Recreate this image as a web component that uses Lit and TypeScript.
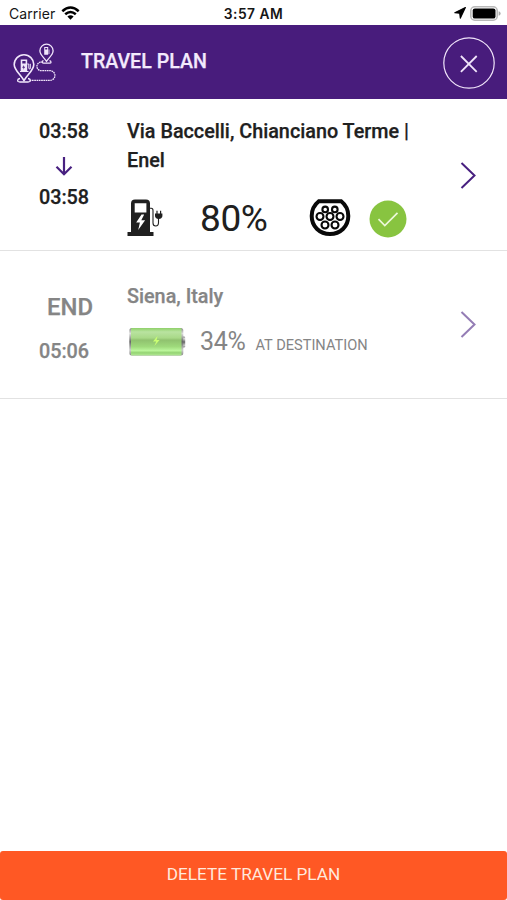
import { LitElement, html, css, svg } from "lit";
import { customElement } from "lit/decorators.js";

@customElement("status-bar")
export class StatusBar extends LitElement {
  static styles = css`
    :host { display: grid; grid-template-columns: 1fr auto 1fr; align-items: center; height: 25px; box-sizing: border-box; padding: 2px 6px 0 9px; background: #fff; color: #161616; font: 400 14px/20px Inter, sans-serif; }
    .left { display: flex; align-items: center; gap: 6px; letter-spacing: .05px; }
    .left svg { margin-top: -2px; }
    .time { font-weight: 600; font-size: 13.8px; letter-spacing: .5px; margin-right: 3px; }
    .right { display: flex; align-items: center; justify-content: flex-end; gap: 4px; }
    .right svg { margin-top: -1px; }
    svg { display: block; }
  `;
  render() {
    return html`
      <div class="left"><span>Carrier</span>
        <svg width="19" height="14" viewBox="0 0 19 14" fill="none" stroke="#000" stroke-width="2.5">
          <path d="M1.3 5.2Q9.5-2.2 17.7 5.2M4.2 8.3Q9.5 3.6 14.8 8.3"/><path d="M6.4 10.6Q9.5 7.9 12.6 10.6L9.5 13.7Z" fill="#000" stroke="none"/>
        </svg>
      </div>
      <div class="time">3:57 AM</div>
      <div class="right">
        <svg width="12" height="12" viewBox="0 0 12 12"><path d="M11.4.6L.8 5.7 5.7 6.3 6.3 11.2Z" fill="#000" stroke="#000" stroke-width="1.1" stroke-linejoin="round"/></svg>
        <svg width="31" height="15" viewBox="0 0 31 15"><rect x=".8" y=".8" width="26.4" height="13.4" rx="4" fill="#fff" stroke="#b9b9b9" stroke-width="1.6"/><rect x="2.7" y="2.4" width="22.8" height="10.2" rx="2.2"/><path d="M28.6 5.2q2 .5 2 2.3t-2 2.3z" fill="#aaa"/></svg>
      </div>`;
  }
}

@customElement("plan-header")
export class PlanHeader extends LitElement {
  static styles = css`
    :host { display: flex; align-items: center; height: 73.5px; box-sizing: border-box; padding: 0 12px; background: #481c7c; color: #f3eafc; }
    .route { display: block; margin-top: 2px; }
    h1 { flex: 1; margin: 0 0 0 23px; font: 500 19.6px/24px Roboto, sans-serif; -webkit-text-stroke: .25px; }
    button { width: 52px; height: 52px; padding: 0; border: 0; background: none; margin-top: 3px; }
    button svg { display: block; }
  `;
  render() {
    return html`
      <svg class="route" width="46" height="44" viewBox="12 40 46 44" fill="none" stroke="#f1e6fb" stroke-width="1.6">
        <path d="M24 79.5C20 73 14.2 69 14.2 63.5a9.8 9.8 0 0 1 19.6 0C33.8 69 28 73 24 79.5Z"/>
        <path d="M46.5 60.3C44 56.5 39.9 54 39.9 49.8a6.6 6.6 0 0 1 13.2 0C53.1 54 49 56.5 46.5 60.3Z" stroke-width="1.3"/>
        <path d="M20 77.5c-3 .5-3.3 3.3 0 3.5h8c3.3-.2 3-3 0-3.5M43.5 59.7c-2 .6-1.8 2.2 0 2.4h6c2 0 2-1.8 0-2.4" stroke-width="1.3"/>
        <path d="M43 61.2h-2.7a4.3 4.3 0 0 0 0 8.4H50a4.9 4.9 0 0 1 0 9.8H29" stroke-width="1.3" stroke-dasharray="1.7 .6"/>
        <path d="M20 70.5h8.5M27.3 63h1.5v4.5q1.5 1.5 1.5-.5v-4.2" stroke-width="1"/>
        <path fill="#f1e6fb" stroke="none" fill-rule="evenodd" d="M20.7 58.5h6.5V71h-6.5zM22.3 60v2.4h3.3V60zM23.8 64l-1.6 2.8h1.4l-.4 2 2-3h-1.4z"/>
        <path fill="#f1e6fb" stroke="none" fill-rule="evenodd" d="M44.2 46h4v7.8h-4zM45.2 47v1.4h2V47z"/><path d="M49 48.5v4.5" stroke-width=".8"/>
      </svg>
      <h1>TRAVEL PLAN</h1>
      <button aria-label="Close"><svg width="52" height="52" viewBox="0 0 52 52" fill="none" stroke="#f0e4fa"><circle cx="26" cy="26" r="25.2" stroke-width="1.2"/><path d="M17.9 19L33.7 34.8M33.7 19L17.9 34.8" stroke-width="1.8"/></svg></button>`;
  }
}

@customElement("app-root")
export class AppRoot extends LitElement {
  static styles = css`
    :host { display: flex; flex-direction: column; height: 900px; background: #fff; font-family: Roboto, sans-serif; color: #202020; }
    svg { display: block; }
    .stop { display: grid; grid-template-columns: 127px 1fr 47px; box-sizing: border-box; border-bottom: 1.5px solid #e2e2e2; }
    .first { height: 152.5px; }
    .last { height: 148px; color: #858585; }
    .times { display: flex; flex-direction: column; align-items: center; width: 128px; font: 500 19.8px/24px Roboto, sans-serif; -webkit-text-stroke: .25px; }
    .first .times { padding-top: 21px; }
    .times .arrow { margin: 13px 0 10px; }
    .last .times { padding-top: 43px; }
    .end { font-size: 23.9px; line-height: 26px; margin-left: 12px; }
    .end + span { margin-top: 20px; }
    .name { font: 500 19.8px/29px Roboto, sans-serif; white-space: nowrap; -webkit-text-stroke: .25px; }
    .first .name { padding-top: 18px; }
    .last .name { padding-top: 31px; }
    .facts { display: flex; align-items: center; height: 46px; margin-top: 20px; }
    .charge { width: 73px; margin: 2px 0 0 35px; font-size: 37px; line-height: 44px; letter-spacing: -.4px; }
    .plug { margin-left: 36px; }
    .check { margin: 3px 0 0 18px; }
    .arrival { display: flex; align-items: center; height: 36px; margin-top: 13px; }
    .level { font-size: 25px; line-height: 34px; margin: 0 0 0 14px; letter-spacing: -.3px; }
    .note { font-size: 14.6px; line-height: 20px; margin: 6px 0 0 10px; white-space: nowrap; }
    .first .chevron { padding-top: 63px; }
    .last .chevron { padding-top: 60px; opacity: .58; }
    .delete { margin-top: auto; height: 49px; border: 0; border-radius: 3px; padding: 0 0 3px; background: #ff5824; color: #ffe9dd; font: 400 17.2px/24px Roboto, sans-serif; }
  `;

  private chevron() {
    return html`<div class="chevron"><svg width="17" height="27" viewBox="0 0 17 27" fill="none" stroke="#482080" stroke-width="2"><path d="M1.5 1L14.5 13.5 1.5 26"/></svg></div>`;
  }

  private chargingPoint() {
    return html`<svg width="38" height="38" viewBox="0 0 38 38" fill="none" stroke="#202020">
      <path fill="#202020" stroke="none" fill-rule="evenodd" d="M4 33V4.5Q4 .5 8 .5h11q4 0 4 4V33h3.5v4H.5v-4zM7.7 4.2v9.2h11.7V4.2zM14.5 15.5L9.2 23.6h3.7L11.2 31l6.9-9.8h-3.8l2.9-5.7z"/>
      <path d="M22.5 9.3h1.8q1.7 0 1.7 2.3V24q0 3 2.7 3 2.8 0 2.8-3.5V19" stroke-width="1.1"/>
      <path fill="#202020" stroke="none" d="M28 14.5h7.4v2.2q0 3-3.7 3.3-3.7-.3-3.7-3.3z"/><path d="M30 11.7V15M33.6 11.7V15" stroke-width="1.2"/>
    </svg>`;
  }

  private connector() {
    const pins = [[16.2, 11.4], [25.8, 11.4], [11, 18.5], [21, 18.5], [31, 18.5], [16, 27], [26, 27]];
    return html`<svg class="plug" width="42" height="39" viewBox="0 0 42 39" fill="none" stroke="#090909">
      <path d="M9.8 3.2H32.2A18.8 18.8 0 0 1 39.3 18C39.3 28.6 31.2 36 21 36S2.7 28.6 2.7 18A18.8 18.8 0 0 1 9.8 3.2Z" stroke-width="4"/>
      ${pins.map(([x, y], i) => svg`<circle cx=${x} cy=${y} r=${i < 2 ? 2.8 : 3.5} stroke-width="2.1"/>`)}
    </svg>`;
  }

  private battery() {
    return html`<svg width="59" height="30" viewBox="0 0 59 30">
      <defs>
        <linearGradient id="cell" x2="0" y2="1"><stop offset="0" stop-color="#8fd069"/><stop offset=".14" stop-color="#b9e3a0"/><stop offset=".36" stop-color="#a9d988"/><stop offset=".44" stop-color="#90c26f"/><stop offset=".68" stop-color="#9fda7c"/><stop offset=".82" stop-color="#bbf69b"/><stop offset=".9" stop-color="#95d474"/><stop offset="1" stop-color="#b3ea96"/></linearGradient>
        <linearGradient id="cap" x2="0" y2="1"><stop stop-color="#888"/><stop offset=".2" stop-color="#ddd"/><stop offset=".5" stop-color="#666"/><stop offset=".8" stop-color="#ccc"/><stop offset="1" stop-color="#888"/></linearGradient>
      </defs>
      <rect x="55" y="9.5" width="3.2" height="11" rx="1.3" fill="url(#cap)"/>
      <rect x="2.3" y="1" width="54" height="27.5" rx="2.5" fill="url(#cap)"/>
      <rect x="4" y="1" width="50.5" height="27.5" rx="1" fill="url(#cell)"/>
      <path d="M30.5 9L26 14.4h3.2L27.4 19l5.2-6h-3z" fill="#caff72"/>
    </svg>`;
  }

  render() {
    return html`
      <status-bar></status-bar>
      <plan-header></plan-header>
      <section class="stop first">
        <div class="times">
          <span>03:58</span>
          <svg class="arrow" width="18" height="19" viewBox="0 0 18 19" fill="none" stroke="#482080" stroke-width="2.2"><path d="M9 0V17M1.5 9.7L9 17.2 16.5 9.7"/></svg>
          <span>03:58</span>
        </div>
        <div>
          <div class="name">Via Baccelli, Chianciano Terme |<br />Enel</div>
          <div class="facts">
            ${this.chargingPoint()}
            <span class="charge">80%</span>
            ${this.connector()}
            <svg class="check" width="38" height="38" viewBox="0 0 38 38" fill="none"><circle cx="19" cy="19" r="18.5" fill="#88c440"/><path d="M9.5 19.2L15.8 25.5 28.5 12.8" stroke="#ecf8da" stroke-width="1.7"/></svg>
          </div>
        </div>
        ${this.chevron()}
      </section>
      <section class="stop last">
        <div class="times"><span class="end">END</span><span>05:06</span></div>
        <div>
          <div class="name">Siena, Italy</div>
          <div class="arrival">${this.battery()}<span class="level">34%</span><span class="note">AT DESTINATION</span></div>
        </div>
        ${this.chevron()}
      </section>
      <button class="delete">DELETE TRAVEL PLAN</button>`;
  }
}
